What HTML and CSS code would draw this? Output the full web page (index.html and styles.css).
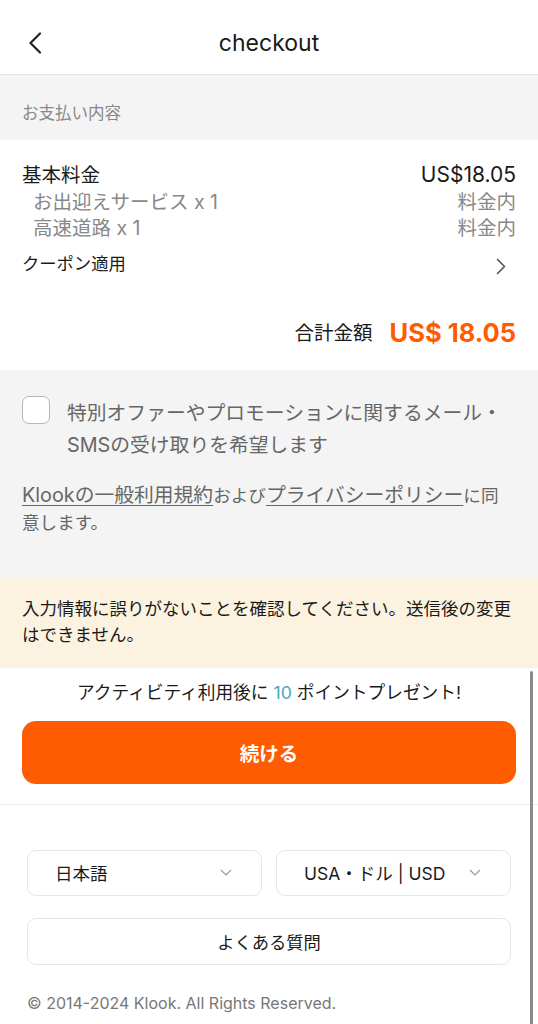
FILE: index.html
```html
<!DOCTYPE html>
<html lang="ja">
<head>
<meta charset="utf-8">
<title>checkout</title>
<link rel="stylesheet" href="styles.css">
</head>
<body>
<div class="page">
  <header class="topbar">
    <span class="back">
      <svg width="14" height="22" viewBox="0 0 14 22"><path d="M12 1.5 L2.5 11 L12 20.5" fill="none" stroke="#222" stroke-width="2.2" stroke-linecap="round" stroke-linejoin="round"/></svg>
    </span>
    <h1 class="title">checkout</h1>
  </header>

  <div class="section-label">お支払い内容</div>

  <section class="prices">
    <div class="row main"><span>基本料金</span><span class="amt">US$18.05</span></div>
    <div class="row sub"><span>お出迎えサービス x 1</span><span>料金内</span></div>
    <div class="row sub"><span>高速道路 x 1</span><span>料金内</span></div>
    <div class="row coupon"><span>クーポン適用</span>
      <svg class="chev" width="10" height="17" viewBox="0 0 10 17"><path d="M1.5 1.5 L8.5 8.5 L1.5 15.5" fill="none" stroke="#555" stroke-width="1.6" stroke-linecap="round" stroke-linejoin="round"/></svg>
    </div>
    <div class="total"><span class="total-label">合計金額</span><span class="total-amount">US$ 18.05</span></div>
  </section>

  <section class="consent">
    <label class="check-row">
      <span class="checkbox"></span>
      <span class="check-text">特別オファーやプロモーションに関するメール・SMSの受け取りを希望します</span>
    </label>
    <p class="terms"><a class="link">Klookの一般利用規約</a><span class="small">および</span><a class="link">プライバシーポリシー</a><span class="small">に同意します。</span></p>
  </section>

  <div class="notice">入力情報に誤りがないことを確認してください。送信後の変更はできません。</div>

  <section class="action">
    <p class="points">アクティビティ利用後に <span class="num">10</span> ポイントプレゼント!</p>
    <button class="cta">続ける</button>
  </section>

  <footer class="footer">
    <div class="selects">
      <div class="select"><span>日本語</span>
        <svg width="12" height="7" viewBox="0 0 12 7"><path d="M1 1 L6 6 L11 1" fill="none" stroke="#999" stroke-width="1.1"/></svg>
      </div>
      <div class="select"><span>USA・ドル | USD</span>
        <svg width="12" height="7" viewBox="0 0 12 7"><path d="M1 1 L6 6 L11 1" fill="none" stroke="#999" stroke-width="1.1"/></svg>
      </div>
    </div>
    <div class="faq">よくある質問</div>
    <p class="copy">© 2014-2024 Klook. All Rights Reserved.</p>
  </footer>

  <div class="scrollbar"></div>
</div>
</body>
</html>
```

FILE: styles.css
```css
* { box-sizing: border-box; }
html, body { margin: 0; padding: 0; }
body {
  font-family: "Inter", "Noto Sans CJK JP", sans-serif;
  color: #222;
  background: #fff;
}
.page { position: relative; width: 538px; overflow: hidden; }

.topbar {
  height: 75px;
  border-bottom: 1px solid #e3e3e3;
  display: flex;
  align-items: center;
  justify-content: center;
  position: relative;
  padding-top: 11px;
}
.back {
  position: absolute;
  left: 28px;
  top: 32px;
  display: flex;
}
.title {
  margin: 0;
  font-size: 23px;
  font-weight: 400;
  line-height: 28px;
  color: #1a1a1a;
}

.section-label {
  background: #f4f4f4;
  height: 65px;
  padding: 28px 22px 0;
  font-size: 16.5px;
  line-height: 20px;
  color: #888;
}

.prices {
  padding: 22px 22px 19px;
  background: #fff;
}
.row {
  display: flex;
  justify-content: space-between;
  align-items: center;
  line-height: 26.5px;
  font-size: 19.5px;
}
.row.main { color: #1a1a1a; }
.row .amt { font-size: 21px; }
.row.sub { color: #888; padding-left: 11px; }
.row.coupon {
  margin-top: 9px;
  line-height: 26px;
  font-size: 17.3px;
  color: #1a1a1a;
  padding-right: 10px;
}
.chev { margin-top: 6px; }
.total {
  margin-top: 38px;
  display: flex;
  justify-content: flex-end;
  align-items: center;
  line-height: 36px;
}
.total-label { font-size: 19.5px; color: #1a1a1a; margin-right: 17px; }
.total-amount { font-size: 25.5px; font-weight: 700; color: #ff5b00; }

.consent {
  background: #f4f4f4;
  padding: 26px 22px 42px;
}
.check-row { display: flex; align-items: flex-start; }
.checkbox {
  flex: 0 0 28px;
  width: 28px;
  height: 28px;
  border: 1.5px solid #b8b8b8;
  border-radius: 7px;
  background: #fff;
  margin-right: 17px;
}
.check-text {
  font-size: 19.8px;
  line-height: 32px;
  color: #666;
  margin-top: 1px;
}
.terms {
  margin: 21px 0 0;
  font-size: 19.8px;
  line-height: 27px;
  color: #666;
}
.link { color: #666; text-decoration: underline; text-underline-offset: 3px; }
.small { font-size: 17.6px; }

.notice {
  background: #fcf2e0;
  padding: 18px 22px 20px;
  font-size: 17.5px;
  line-height: 26px;
  color: #1a1a1a;
}

.action {
  padding: 13px 22px 20px;
  border-bottom: 1px solid #ececec;
}
.points {
  margin: 0 0 16px;
  text-align: center;
  font-size: 17.7px;
  line-height: 24px;
  color: #1a1a1a;
}
.num { color: #4aa8c0; }
.cta {
  display: block;
  width: 100%;
  height: 63px;
  border: none;
  border-radius: 14px;
  background: #ff5b00;
  color: #fff;
  font-family: inherit;
  font-size: 19.5px;
  font-weight: 700;
}

.footer { padding: 45px 27px 20px; }
.selects { display: grid; grid-template-columns: 1fr 1fr; gap: 14px; }
.select {
  height: 46px;
  border: 1px solid #e6e6e6;
  border-radius: 9px;
  display: flex;
  align-items: center;
  justify-content: space-between;
  padding: 0 29px 0 27px;
  font-size: 17.5px;
  color: #1a1a1a;
}
.faq {
  margin-top: 22px;
  height: 47px;
  border: 1px solid #e6e6e6;
  border-radius: 9px;
  display: flex;
  align-items: center;
  justify-content: center;
  font-size: 17.3px;
  color: #1a1a1a;
}
.copy {
  margin: 28px 0 0;
  font-size: 16px;
  line-height: 20px;
  color: #777;
}

.scrollbar {
  position: absolute;
  right: 5px;
  top: 671px;
  width: 3px;
  height: 400px;
  border-radius: 2px;
  background: #8a8a8a;
}
```
